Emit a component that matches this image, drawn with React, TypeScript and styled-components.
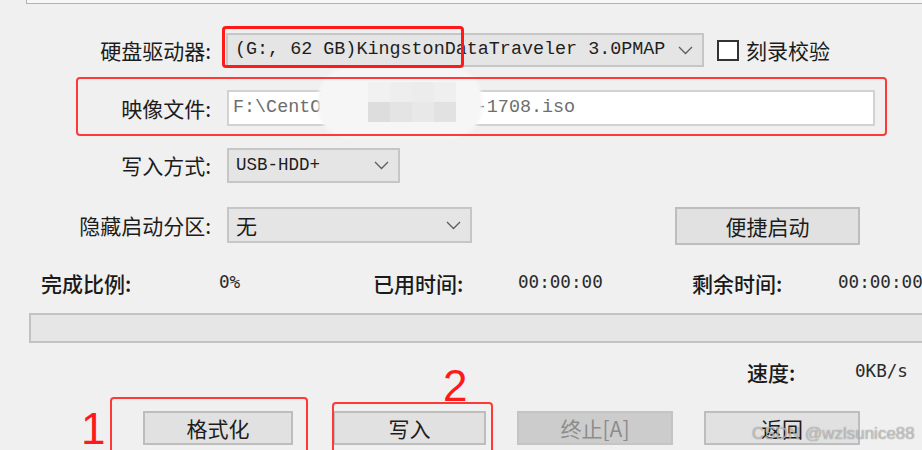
import styled, { createGlobalStyle } from 'styled-components';

const GlobalStyle = createGlobalStyle`
  html, body {
    margin: 0;
    padding: 0;
    background: #f0f0f0;
  }
  body {
    font-family: 'Noto Sans CJK SC', 'Noto Sans', sans-serif;
  }
`;

const CJK = `'Noto Sans CJK SC', 'Noto Sans', sans-serif`;
const MONO = `'Liberation Mono', 'Noto Sans CJK SC', monospace`;
const DIGITS = `'DejaVu Sans Mono', 'Liberation Mono', monospace`;

type Spot = { $x: number; $y: number; $w?: number; $h?: number };

export default function App() {
  return (
    <>
      <GlobalStyle />
      <Dialog>
        <TopGroup />

        <FieldRow $top={29}>
          <Label>硬盘驱动器:</Label>
          <Controls>
            <Combo $w={478} $h={34} $shift={-1}>
              <MonoText>(G:, 62 GB)KingstonDataTraveler 3.0PMAP</MonoText>
              <Chevron />
            </Combo>
            <CheckLabel>
              <CheckBox />
              <span>刻录校验</span>
            </CheckLabel>
          </Controls>
        </FieldRow>

        <FieldRow $top={23}>
          <Label>映像文件:</Label>
          <Controls>
            <PathInput>F:\CentOS-7-x86_64-DVD-1708.iso</PathInput>
          </Controls>
        </FieldRow>

        <FieldRow $top={22}>
          <Label>写入方式:</Label>
          <Controls>
            <Combo $w={173} $h={35}>
              <MonoText $size={17.5}>USB-HDD+</MonoText>
              <Chevron />
            </Combo>
          </Controls>
        </FieldRow>

        <FieldRow $top={22}>
          <Label>隐藏启动分区:</Label>
          <Controls>
            <Combo $w={245} $h={36}>
              <span>无</span>
              <Chevron />
            </Combo>
            <Button $w={185} $h={38} $ml={203} $mt={2}>
              便捷启动
            </Button>
          </Controls>
        </FieldRow>

        <StatsRow>
          <StatLabel>完成比例:</StatLabel>
          <StatValue>0%</StatValue>
          <StatLabel>已用时间:</StatLabel>
          <StatValue>00:00:00</StatValue>
          <StatLabel>剩余时间:</StatLabel>
          <StatValue>00:00:00</StatValue>
        </StatsRow>

        <ProgressTrack />

        <SpeedRow>
          <StatLabel>速度:</StatLabel>
          <StatValue>0KB/s</StatValue>
        </SpeedRow>

        <ButtonRow>
          <Button $w={150} $h={34}>
            格式化
          </Button>
          <Button $w={153} $h={34} $ml={40}>
            写入
          </Button>
          <Button $w={156} $h={34} $ml={31} disabled>
            终止[A]
          </Button>
          <Button $w={156} $h={34} $ml={31}>
            返回
          </Button>
        </ButtonRow>

        {/* privacy blur over the middle of the path */}
        <Mosaic $x={320} $y={70}>
          <TileRow>
            {['#f1f1f1', '#eeeeee', '#ececec', '#efefef'].map((c) => (
              <Tile key={c} $c={c} />
            ))}
          </TileRow>
          <TileRow>
            {['#dddddd', '#e4e4e4', '#e8e8e8', '#e2e2e2'].map((c) => (
              <Tile key={c} $c={c} />
            ))}
          </TileRow>
        </Mosaic>

        {/* red annotations */}
        <Mark $x={222} $y={26} $w={242} $h={42} $thick />
        <Mark $x={76} $y={77} $w={811} $h={59} />
        <Mark $x={110} $y={397} $w={198} $h={70} />
        <Mark $x={332} $y={402} $w={161} $h={70} />
        <Step $x={81} $y={407}>
          1
        </Step>
        <Step $x={443} $y={364}>
          2
        </Step>

        <Watermark $x={752} $y={423}>
          CSDN @wzlsunice88
        </Watermark>
      </Dialog>
    </>
  );
}

function Chevron() {
  return (
    <svg width='15' height='9' viewBox='0 0 15 9'>
      <polyline
        points='1,1 7.5,7.5 14,1'
        fill='none'
        stroke='#5c5c5c'
        strokeWidth='1.3'
      />
    </svg>
  );
}

const Dialog = styled.div`
  position: relative;
  width: 922px;
  height: 450px;
  overflow: hidden;
  background: #f0f0f0;
  color: #1c1c1c;
  font-family: ${CJK};
  font-size: 21px;
  line-height: 1;
`;

const TopGroup = styled.div`
  height: 3px;
  margin-left: 26px;
  background: #f7f7f7;
  border-left: 1px solid #b4b4b4;
  border-bottom: 1px solid #b4b4b4;
`;

const FieldRow = styled.div<{ $top: number }>`
  display: grid;
  grid-template-columns: 212px 1fr;
  column-gap: 15px;
  align-items: start;
  margin-top: ${({ $top }) => $top}px;
`;

const Label = styled.label`
  align-self: center;
  text-align: right;
  padding-right: 1px;
  white-space: nowrap;
`;

const Controls = styled.div`
  display: flex;
  align-items: center;
`;

const Combo = styled.div<{ $w: number; $h: number; $shift?: number }>`
  box-sizing: border-box;
  display: flex;
  align-items: center;
  justify-content: space-between;
  width: ${({ $w }) => $w}px;
  height: ${({ $h }) => $h}px;
  margin-left: ${({ $shift }) => $shift ?? 0}px;
  padding: 0 9px 0 7px;
  background: #e5e5e5;
  border: 2px solid #c6c6c6;
  white-space: nowrap;
`;

const MonoText = styled.span<{ $size?: number }>`
  font-family: ${MONO};
  font-size: ${({ $size }) => $size ?? 18.4}px;
  color: #1e1e1e;
`;

const CheckLabel = styled.label`
  display: flex;
  align-items: center;
  gap: 7px;
  margin-left: 13px;
`;

const CheckBox = styled.span`
  box-sizing: border-box;
  width: 22px;
  height: 21px;
  background: #ffffff;
  border: 2px solid #333333;
`;

const PathInput = styled.div`
  box-sizing: border-box;
  display: flex;
  align-items: center;
  width: 648px;
  height: 36px;
  padding-left: 4px;
  background: #ffffff;
  border: 2px solid #d2d2d2;
  font-family: ${MONO};
  font-size: 18.4px;
  color: #6e6e6e;
  white-space: nowrap;
`;

const Button = styled.button<{ $w: number; $h: number; $ml?: number; $mt?: number }>`
  box-sizing: border-box;
  width: ${({ $w }) => $w}px;
  height: ${({ $h }) => $h}px;
  margin: ${({ $mt }) => $mt ?? 0}px 0 0 ${({ $ml }) => $ml ?? 0}px;
  padding: 0;
  background: #e1e1e1;
  border: 2px solid #bdbdbd;
  border-radius: 0;
  font-family: ${CJK};
  font-size: 21px;
  line-height: 1;
  color: #1c1c1c;

  &:disabled {
    background: #cccccc;
    border-color: #c4c4c4;
    color: #8c8c8c;
  }
`;

const StatsRow = styled.div`
  display: grid;
  grid-template-columns: 178px 154px 145px 174px 146px auto;
  align-items: center;
  height: 24px;
  margin-top: 26px;
  padding-left: 41px;
  white-space: nowrap;
`;

const StatLabel = styled.span`
  font-weight: 500;
  color: #1a1a1a;
`;

const StatValue = styled.span`
  font-family: ${DIGITS};
  font-size: 17.6px;
  color: #2a2a2a;
`;

const ProgressTrack = styled.div`
  box-sizing: border-box;
  width: 910px;
  height: 30px;
  margin: 18px 0 0 29px;
  background: #e6e6e6;
  border: 2px solid #c2c2c2;
`;

const SpeedRow = styled.div`
  display: grid;
  grid-template-columns: 108px auto;
  align-items: center;
  height: 24px;
  margin-top: 17px;
  padding-left: 747px;
  white-space: nowrap;
`;

const ButtonRow = styled.div`
  display: flex;
  margin-top: 27px;
  padding-left: 143px;
`;

const Mosaic = styled.div<Spot>`
  position: absolute;
  left: ${({ $x }) => $x}px;
  top: ${({ $y }) => $y}px;
  box-sizing: border-box;
  display: flex;
  flex-direction: column;
  width: 160px;
  height: 66px;
  padding: 12px 0 0 48px;
  border-radius: 28px;
  background: #f6f6f6;
  box-shadow: 0 0 3px 2px rgba(246, 246, 246, 0.9);
`;

const TileRow = styled.div`
  display: flex;
`;

const Tile = styled.span<{ $c: string }>`
  width: 22px;
  height: 20px;
  background: ${({ $c }) => $c};
`;

const Mark = styled.div<Spot & { $thick?: boolean }>`
  position: absolute;
  left: ${({ $x }) => $x}px;
  top: ${({ $y }) => $y}px;
  width: ${({ $w }) => $w}px;
  height: ${({ $h }) => $h}px;
  box-sizing: border-box;
  border: ${({ $thick }) => ($thick ? 3 : 2.5)}px solid
    ${({ $thick }) => ($thick ? '#ff1a1a' : '#ff3838')};
  border-radius: 4px;
`;

const Step = styled.span<Spot>`
  position: absolute;
  left: ${({ $x }) => $x}px;
  top: ${({ $y }) => $y}px;
  font-family: 'Liberation Sans', Arial, sans-serif;
  font-size: 44px;
  line-height: 1;
  color: #ff1a1a;
`;

const Watermark = styled.span<Spot>`
  position: absolute;
  left: ${({ $x }) => $x}px;
  top: ${({ $y }) => $y}px;
  font-family: 'Liberation Sans', Arial, sans-serif;
  font-size: 17px;
  line-height: 1.3;
  color: rgba(255, 255, 255, 0.55);
  text-shadow: 0 0 1px rgba(40, 40, 40, 0.7);
  white-space: nowrap;
`;
